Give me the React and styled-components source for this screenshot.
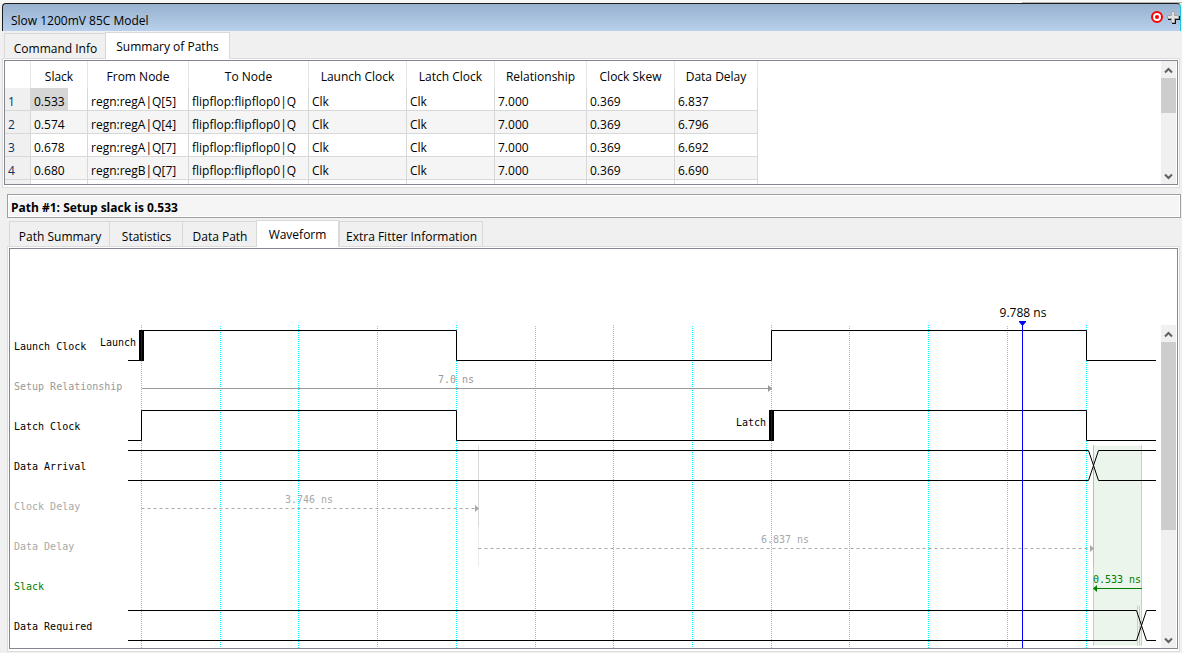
import React, { useState } from "react";
import styled, { createGlobalStyle } from "styled-components";

const GlobalStyle = createGlobalStyle`
  * { box-sizing: border-box; }
  body {
    margin: 0;
    background: #f0f0f0;
    color: #000;
    font: 12px/16px "Open Sans", "Noto Sans", sans-serif;
  }
  button { font: inherit; color: inherit; }
`;

const Window = styled.main`
  display: flex;
  flex-direction: column;
  min-height: 100vh;
  padding: 0 1px 1px 2px;
`;

const TopEdge = styled.div`
  flex: none;
  height: 3px;
  margin: 0 -1px 0 -2px;
  background: #f8f8f8;
  display: flex;
  justify-content: flex-end;
  align-items: flex-start;

  &::after {
    content: "";
    width: 160px;
    height: 2px;
    border-bottom: 1px solid #b4b4b4;
  }
`;

const TitleBar = styled.header`
  flex: none;
  display: flex;
  align-items: center;
  height: 28px;
  padding: 6px 0 0 8px;
  border-top: 1px solid #1c1c1c;
  border-left: 1px solid #1c1c1c;
  border-right: 1px solid #18c4e0;
  border-radius: 4px 4px 0 0;
  background: linear-gradient(#98b1ce, #b8d0ec);
`;

const Title = styled.h1`
  flex: 1;
  margin: 0;
  font-size: 12px;
  line-height: 16px;
  font-weight: 400;
`;

const IconButton = styled.button`
  display: block;
  width: 14px;
  height: 14px;
  margin: -8px 2px 0 0;
  padding: 0;
  border: 0;
  background: none;

  & + & { margin-right: 0; }
`;

const TabList = styled.div`
  flex: none;
  display: flex;
  align-items: flex-end;
  height: 27px;
  padding-left: 2px;
`;

const Tab = styled.button`
  height: ${(p) => (p.$active ? 27 : 25)}px;
  width: ${(p) => p.$width}px;
  margin: 0 ${(p) => (p.$active ? 0 : -1)}px ${(p) => (p.$active ? -1 : 0)}px 0;
  padding: ${(p) => (p.$active ? "2px 0 0" : "5px 0 0 1px")};
  position: relative;
  z-index: ${(p) => (p.$active ? 1 : 0)};
  border: 1px solid #d9d9d9;
  border-bottom: 0;
  background: ${(p) => (p.$active ? "#fff" : "#f0f0f0")};
  white-space: nowrap;
`;

const Pane = styled.section`
  display: flex;
  flex: ${(p) => (p.$grow ? "1 0 auto" : "none")};
  margin: ${(p) => (p.$grow ? "0 1px 0 5px" : "0 1px 0 0")};
  padding: 1px 1px 2px;
  border: 1px solid #dcdcdc;
  background: #fff;
`;

const Frame = styled.div`
  flex: 1;
  display: flex;
  min-width: 0;
  min-height: ${(p) => p.$minHeight}px;
  height: ${(p) => (p.$height ? `${p.$height}px` : "auto")};
  padding-right: 1px;
  border: 1px solid #828790;
  background: #fff;
  overflow: hidden;
`;

const TableArea = styled.div`
  flex: 1;
  overflow: hidden;
`;

const PathTable = styled.table`
  table-layout: fixed;
  width: 753px;
  border-collapse: separate;
  border-spacing: 0;
`;

const ColumnHead = styled.th`
  height: 27px;
  padding: 4px 0 0;
  border-right: 1px solid #e5e5e5;
  font-weight: 400;
  text-align: center;
  white-space: nowrap;
`;

const RowHead = styled.th`
  height: 23px;
  padding: 5px 0 0 3px;
  border-right: 1px solid #d8d8d8;
  border-bottom: 1px solid #d8d8d8;
  background: #f0f0f0;
  color: #0a3260;
  font-weight: 400;
  text-align: left;
`;

const Row = styled.tr`
  background: ${(p) => (p.$shaded ? "#f5f5f5" : "#fff")};
`;

const Cell = styled.td`
  height: 23px;
  padding: 5px 0 0 3px;
  border-right: 1px solid #d8d8d8;
  border-bottom: 1px solid #d8d8d8;
  background: ${(p) => (p.$selected ? "linear-gradient(90deg, #d6d6d6 37px, transparent 37px)" : "none")};
  white-space: nowrap;
`;

const ScrollTrack = styled.div`
  flex: none;
  display: flex;
  flex-direction: column;
  width: 15px;
  margin-top: ${(p) => p.$top || 0}px;
  background: #f0f0f0;
`;

const ScrollButton = styled.button`
  flex: none;
  display: flex;
  align-items: center;
  justify-content: center;
  height: 17px;
  padding: 1px 0 0;
  border: 0;
  background: #f0f0f0;
`;

const ScrollRail = styled.div`
  flex: 1;
`;

const ScrollThumb = styled.div`
  height: ${(p) => p.$size}px;
  background: #cdcdcd;
`;

const PathBanner = styled.h2`
  flex: none;
  height: 24px;
  margin: 6px 0 1px 5px;
  padding: 5px 3px 0;
  border: 1px solid #a0a0a0;
  box-shadow: inset 0 0 0 1px #fff;
  background: #f5f5f5;
  font-size: 12px;
  line-height: 16px;
  font-weight: 700;
`;

const DetailTabs = styled(TabList)`
  padding-left: 7px;
`;

const SignalList = styled.ul`
  flex: none;
  width: 118px;
  margin: 0;
  padding: 78px 0 0 4px;
  list-style: none;
  font: 10px/40px "DejaVu Sans Mono", monospace;
  white-space: nowrap;
`;

const Signal = styled.li`
  height: 40px;
  color: ${(p) => p.$color};
`;

const Plot = styled.svg`
  flex: 1;
  min-width: 0;
  overflow: visible;
  font: 10px "DejaVu Sans Mono", monospace;
`;

const CursorLabel = styled.text`
  font: 12px "Open Sans", "Noto Sans", sans-serif;
`;

const columns = [
  ["Slack", 57],
  ["From Node", 101],
  ["To Node", 120],
  ["Launch Clock", 98],
  ["Latch Clock", 88],
  ["Relationship", 92],
  ["Clock Skew", 88],
  ["Data Delay", 83],
];

const paths = [
  ["0.533", "regn:regA|Q[5]", "flipflop:flipflop0|Q", "Clk", "Clk", "7.000", "0.369", "6.837"],
  ["0.574", "regn:regA|Q[4]", "flipflop:flipflop0|Q", "Clk", "Clk", "7.000", "0.369", "6.796"],
  ["0.678", "regn:regA|Q[7]", "flipflop:flipflop0|Q", "Clk", "Clk", "7.000", "0.369", "6.692"],
  ["0.680", "regn:regB|Q[7]", "flipflop:flipflop0|Q", "Clk", "Clk", "7.000", "0.369", "6.690"],
];

const signals = [
  ["Launch Clock", "#000"],
  ["Setup Relationship", "#999"],
  ["Latch Clock", "#000"],
  ["Data Arrival", "#000"],
  ["Clock Delay", "#a8a8a8"],
  ["Data Delay", "#a8a8a8"],
  ["Slack", "#008000"],
  ["Data Required", "#000"],
];

const gridLines = [0, 79, 157, 236, 315, 394, 472, 551, 630, 708, 787, 866, 945];

const reportTabs = [
  ["Command Info", 102],
  ["Summary of Paths", 125],
];

const detailTabs = [
  ["Path Summary", 101],
  ["Statistics", 74],
  ["Data Path", 75],
  ["Waveform", 83],
  ["Extra Fitter Information", 144],
];

function Tabs({ as: List = TabList, items, initial, label }) {
  const [active, setActive] = useState(initial);
  return (
    <List role="tablist" aria-label={label}>
      {items.map(([name, width]) => (
        <Tab
          key={name}
          type="button"
          role="tab"
          aria-selected={name === active}
          $active={name === active}
          $width={width}
          onClick={() => setActive(name)}
        >
          {name}
        </Tab>
      ))}
    </List>
  );
}

function Chevron({ down }) {
  return (
    <svg width="9" height="7" viewBox="0 0 9 7" aria-hidden="true">
      <path
        d={down ? "M1 1.5 L4.5 5 L8 1.5" : "M1 5.5 L4.5 2 L8 5.5"}
        fill="none"
        stroke="#606060"
        strokeWidth="2"
      />
    </svg>
  );
}

function ScrollBar({ top, size }) {
  return (
    <ScrollTrack $top={top}>
      <ScrollButton type="button" aria-label="Scroll up">
        <Chevron />
      </ScrollButton>
      <ScrollRail>
        <ScrollThumb $size={size} />
      </ScrollRail>
      <ScrollButton type="button" aria-label="Scroll down">
        <Chevron down />
      </ScrollButton>
    </ScrollTrack>
  );
}

function Waveform() {
  return (
    <Plot role="img" aria-label="Setup timing waveform" width="100%">
      <g transform="translate(13.5 76.5)" fill="none" stroke="#000">
        <rect x="952" y="120" width="48" height="200" fill="#ebf5eb" stroke="none" />
        <path d="M952 120V320M1000 120V320" stroke="#b5d9b5" />
        <path d="M952 120V241" stroke="#a6cba6" />
        <path d="M337 120V201" stroke="#d9d9d9" />
        <path d="M337 201V241" stroke="#ebebeb" />
        <path d="M996 280V320M998 280V320M1000 280V320" stroke="#c6d0c6" />

        {gridLines.map((x, i) => (
          <path key={x} d={`M${x} ${i % 2 ? 0.5 : -0.5}V323`} stroke="#00ffff" strokeDasharray="1 1" />
        ))}

        <path d="M-13.5 35H0V5H315V35H630V5H945V35H1014.5" />
        <path d="M-13.5 115H0V85H315V115H630V85H945V115H1014.5" />
        <path d="M-13.5 125H947L957 155H1014.5M-13.5 155H947L957 125H1014.5" />
        <path d="M-13.5 285H995L1005 315H1014.5M-13.5 315H995L1005 285H1014.5" />
        <path d="M0 4.5V35.5M630 84.5V115.5" strokeWidth="5" />
        <path d="M0 5.5V35.5M630 85.5V115.5" stroke="#1a1e1e" />

        <path d="M0.5 63H630" stroke="#999" />
        <path d="M626.5 59.5V66.5L630.5 63Z" fill="#999" stroke="none" />
        <g stroke="#a8a8a8" strokeDasharray="3 3">
          <path d="M0 183H337" />
          <path d="M337 223H952" />
        </g>
        <path d="M333.5 179.5V186.5L337.5 183ZM948.5 219.5V226.5L952.5 223Z" fill="#a8a8a8" stroke="none" />
        <path d="M952 263H1000.5" stroke="#008000" />
        <path d="M955.5 259.5V266.5L951.5 263Z" fill="#008000" stroke="none" />

        <path d="M881 -4V323" stroke="#0000ff" />
        <path d="M877.5 -4.5H884.5V-3.5L882 -0.5H880L877.5 -3.5Z" fill="#0000ff" stroke="none" />
      </g>
      <g transform="translate(14 76)">
        <CursorLabel x="881" y="-8" textAnchor="middle">9.788 ns</CursorLabel>
        <text x="-6" y="21" textAnchor="end">Launch</text>
        <text x="624" y="101" textAnchor="end">Latch</text>
        <text x="314" y="58" textAnchor="middle" fill="#999">7.0 ns</text>
        <text x="167" y="178" textAnchor="middle" fill="#a8a8a8">3.746 ns</text>
        <text x="643" y="218" textAnchor="middle" fill="#a8a8a8">6.837 ns</text>
        <text x="975" y="258" textAnchor="middle" fill="#008000">0.533 ns</text>
      </g>
    </Plot>
  );
}

export default function App() {
  return (
    <>
      <GlobalStyle />
      <Window>
        <TopEdge />
        <TitleBar>
          <Title>Slow 1200mV 85C Model</Title>
          <IconButton type="button" aria-label="Locate">
            <svg width="14" height="14" viewBox="0 0 14 14">
              <circle cx="7" cy="7" r="5" fill="#fff" stroke="#f00" strokeWidth="2" />
              <circle cx="7" cy="7" r="2" fill="#f00" />
            </svg>
          </IconButton>
          <IconButton type="button" aria-label="Add">
            <svg width="14" height="14" viewBox="0 0 14 14">
              <path d="M6 3H9V6H14V10H10V14H6V10H2V7H6Z" fill="#111" />
              <path d="M5.5 1.5H8.5V5.5H12.5V8.5H8.5V12.5H5.5V8.5H1.5V5.5H5.5Z" fill="#e6e2e2" stroke="#a6a6a6" />
            </svg>
          </IconButton>
        </TitleBar>

        <Tabs items={reportTabs} initial="Summary of Paths" label="Report" />
        <Pane>
          <Frame $height={125}>
            <TableArea>
              <PathTable>
                <colgroup>
                  <col width="26" />
                  {columns.map(([name, width]) => (
                    <col key={name} width={width} />
                  ))}
                </colgroup>
                <thead>
                  <tr>
                    <ColumnHead />
                    {columns.map(([name]) => (
                      <ColumnHead key={name} scope="col">{name}</ColumnHead>
                    ))}
                  </tr>
                </thead>
                <tbody>
                  {paths.map((path, r) => (
                    <Row key={path[0]} $shaded={r % 2 === 1}>
                      <RowHead scope="row">{r + 1}</RowHead>
                      {path.map((value, c) => (
                        <Cell key={c} $selected={r === 0 && c === 0}>{value}</Cell>
                      ))}
                    </Row>
                  ))}
                  <Row>
                    <RowHead />
                    {columns.map(([name]) => (
                      <Cell key={name} />
                    ))}
                  </Row>
                </tbody>
              </PathTable>
            </TableArea>
            <ScrollBar size={35} />
          </Frame>
        </Pane>

        <PathBanner>Path #1: Setup slack is 0.533</PathBanner>

        <Tabs as={DetailTabs} items={detailTabs} initial="Waveform" label="Path details" />
        <Pane $grow>
          <Frame $minHeight={401}>
            <SignalList>
              {signals.map(([name, color]) => (
                <Signal key={name} $color={color}>{name}</Signal>
              ))}
            </SignalList>
            <Waveform />
            <ScrollBar top={76} size={188} />
          </Frame>
        </Pane>
      </Window>
    </>
  );
}
